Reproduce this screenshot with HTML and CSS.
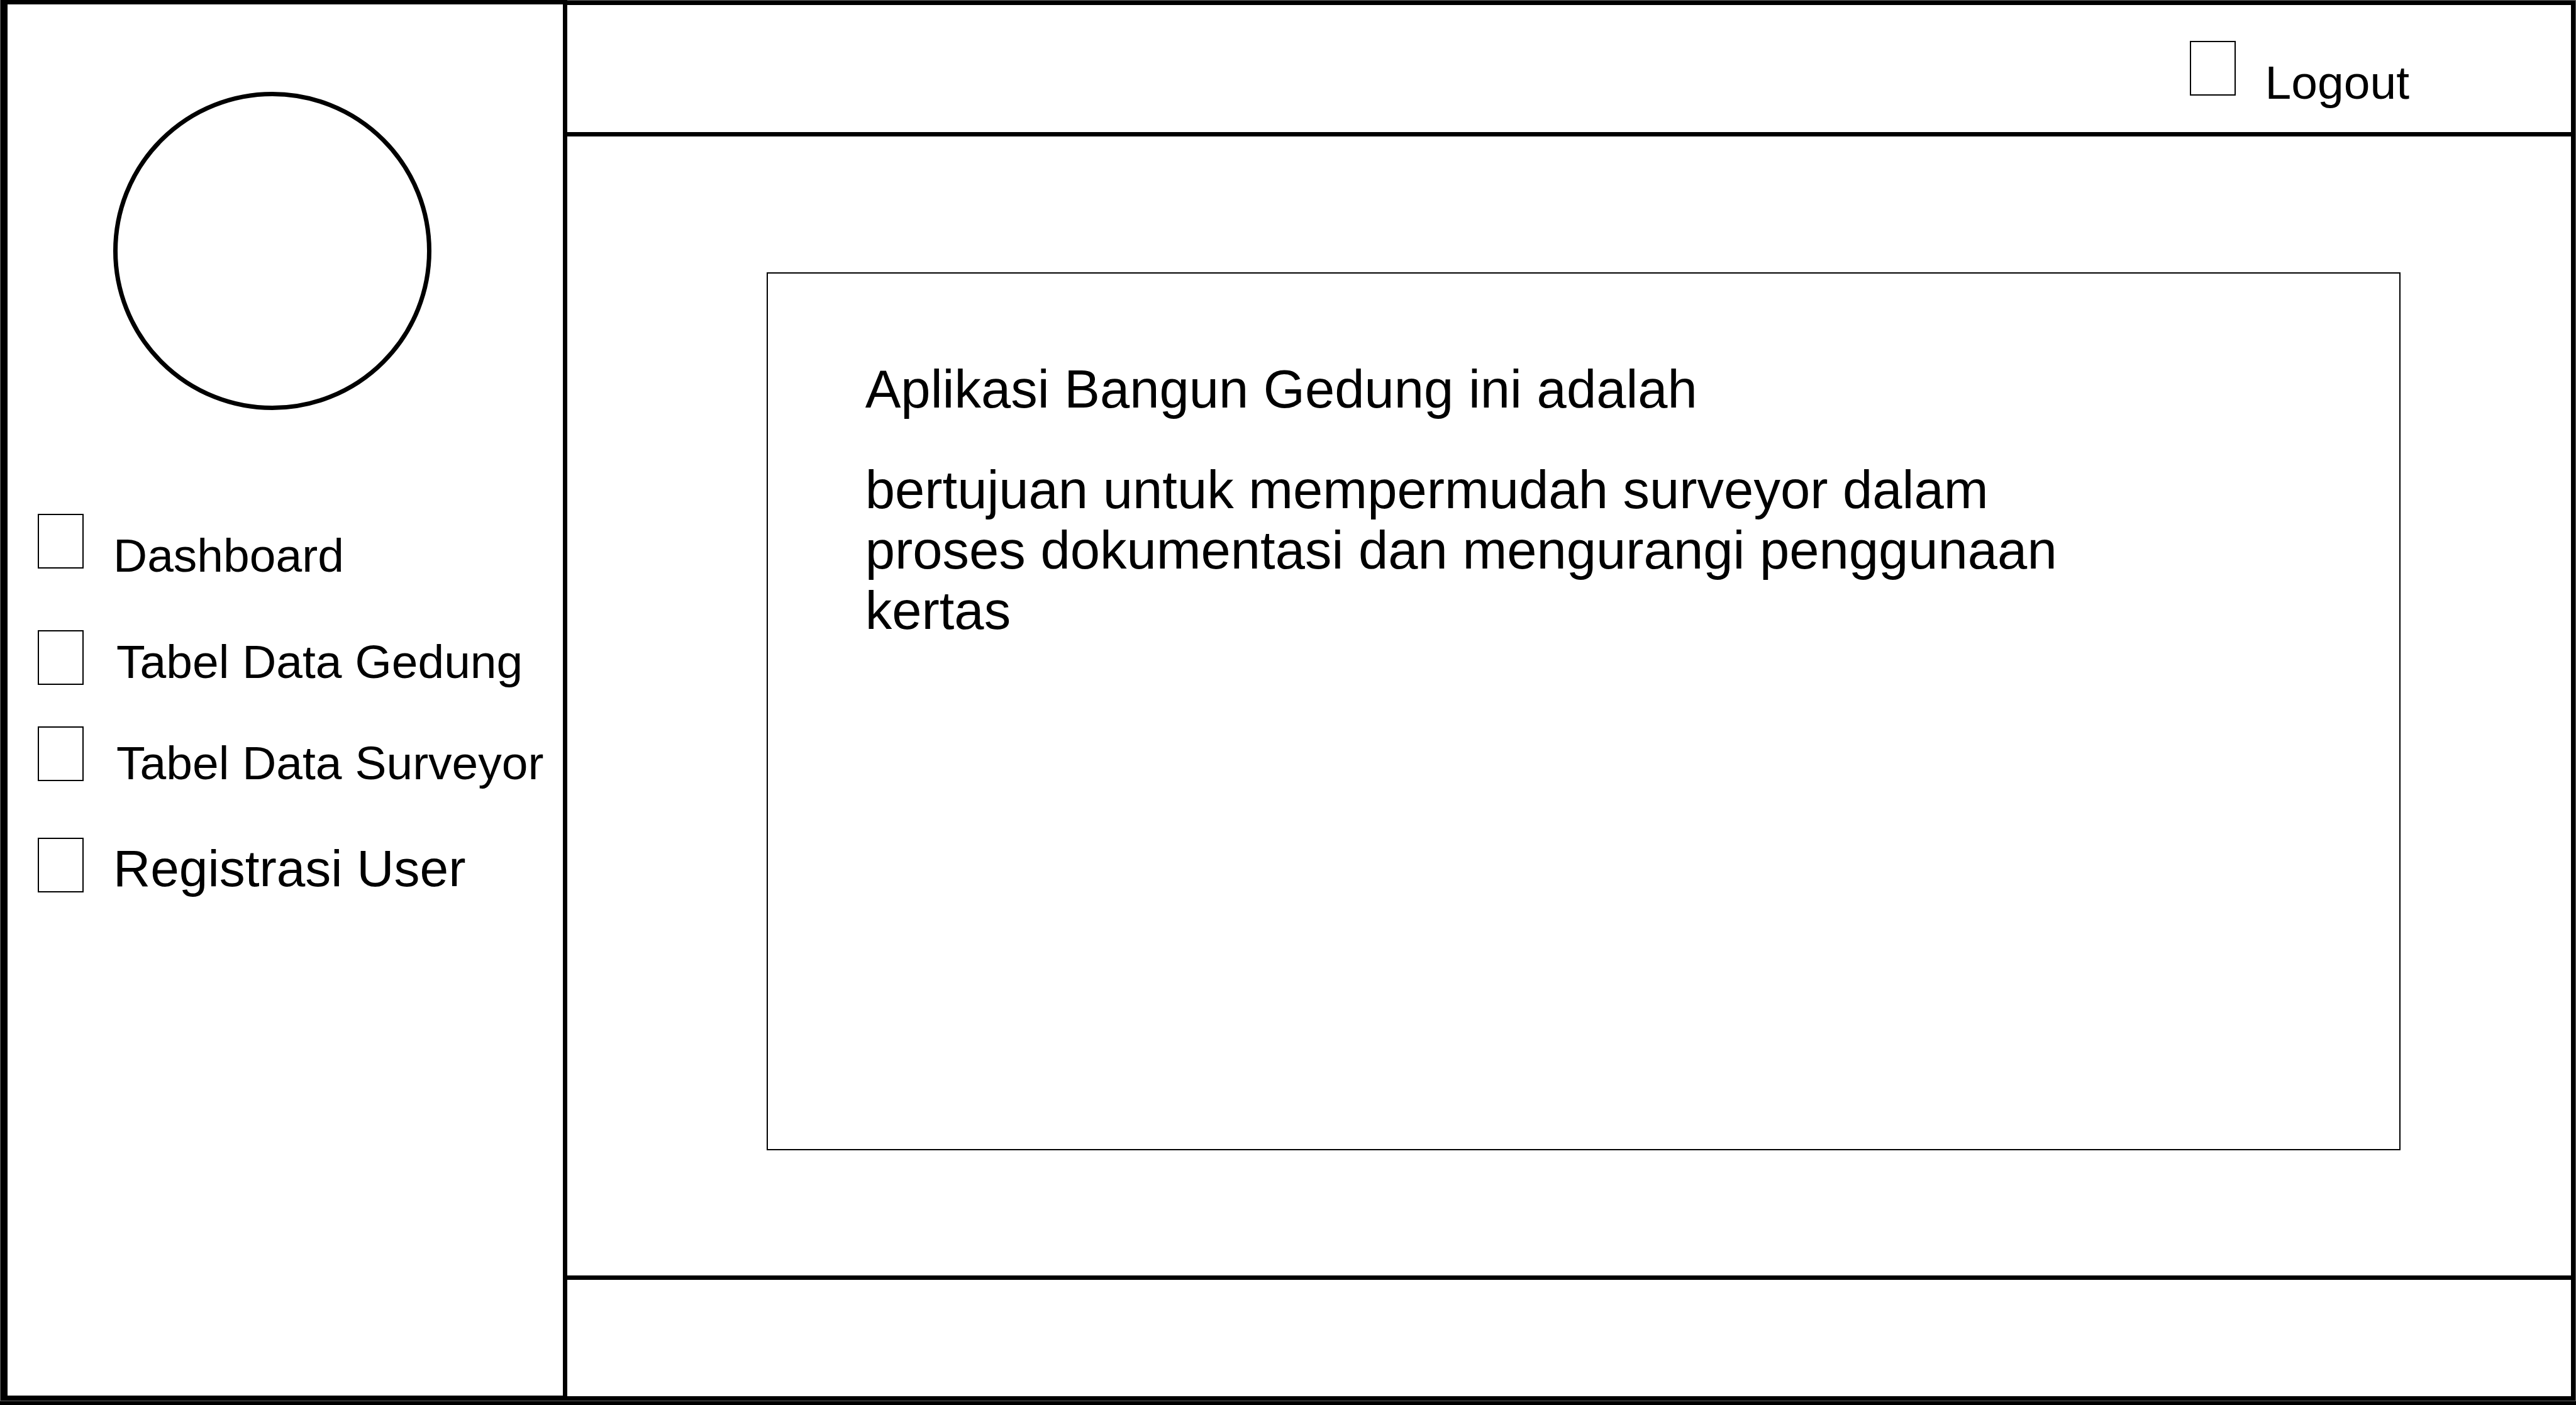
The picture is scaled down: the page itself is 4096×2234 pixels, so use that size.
FILE: index.html
```html
<!DOCTYPE html>
<html lang="id">
<head>
  <meta charset="utf-8">
  <meta name="viewport" content="width=device-width, initial-scale=1">
  <title>Aplikasi Bangun Gedung</title>
  <link rel="stylesheet" href="styles.css">
</head>
<body>
  <div class="app">
    <aside class="sidebar">
      <div class="avatar"></div>
      <nav class="nav">
        <a class="item item-low item-spaced" href="#dashboard"><span class="icon"></span><span class="label">Dashboard</span></a>
        <a class="item item-high item-table" href="#gedung"><span class="icon"></span><span class="label">Tabel Data Gedung</span></a>
        <a class="item item-mid item-table item-spaced" href="#surveyor"><span class="icon"></span><span class="label">Tabel Data Surveyor</span></a>
        <a class="item item-large" href="#registrasi"><span class="icon"></span><span class="label">Registrasi User</span></a>
      </nav>
    </aside>
    <div class="page">
      <header class="header">
        <button class="item item-low" type="button"><span class="icon"></span><span class="label">Logout</span></button>
      </header>
      <main class="content">
        <section class="card">
          <p class="text">Aplikasi Bangun Gedung ini adalah</p>
          <p class="text">bertujuan untuk mempermudah surveyor dalam proses dokumentasi dan mengurangi penggunaan kertas</p>
        </section>
      </main>
      <footer class="footer"></footer>
    </div>
  </div>
</body>
</html>
```
FILE: styles.css
```css
* {
  box-sizing: border-box;
}

body {
  margin: 0;
  background: #fff;
  color: #000;
  font-family: "Liberation Sans", Arial, sans-serif;
  font-size: 75px;
  line-height: 84px;
}

.app {
  display: grid;
  grid-template-columns: 22% 1fr;
  min-height: 100vh;
  padding: 0 1px 1px;
  border-bottom: 6px solid #000;
  background: #666;
}

.sidebar {
  padding: 139px 0 0 48px;
  border: solid #000;
  border-width: 7px 7px 8px 11px;
  background: #fff;
}

.avatar {
  width: 506px;
  height: 506px;
  margin-left: 120px;
  border: 7px solid #000;
  border-radius: 50%;
}

.nav {
  display: flex;
  flex-direction: column;
  gap: 61px;
  margin-top: 165px;
}

.item {
  display: flex;
  align-items: flex-start;
  gap: 47px;
  padding: 0;
  border: 0;
  background: none;
  color: inherit;
  font: inherit;
  text-align: left;
  text-decoration: none;
  white-space: nowrap;
  cursor: pointer;
}

.icon {
  flex: none;
  width: 73px;
  height: 87px;
  border: 2px solid #000;
}

.item-low .label {
  padding-top: 24px;
}

.item-mid .label {
  padding-top: 16px;
}

.item-high .label {
  padding-top: 8px;
}

.item-table .label {
  padding-left: 5px;
}

.item-spaced {
  padding-bottom: 16px;
}

.item-large {
  font-size: 82px;
  line-height: 98px;
}

.page {
  display: flex;
  flex-direction: column;
  margin-top: 1px;
  border: solid #000;
  border-width: 7px 7px 7px 0;
  background: #fff;
}

.header {
  display: flex;
  justify-content: flex-end;
  padding: 57px 257px 37px 0;
  border-bottom: 7px solid #000;
}

.content {
  display: flex;
  flex: 1;
  padding: 216px 271px 199px 317px;
}

.card {
  flex: 1;
  padding: 136px 155px;
  border: 2px solid #000;
}

.text {
  max-width: 2000px;
  margin: 0 0 64px;
  font-size: 85px;
  line-height: 96px;
}

.footer {
  height: 192px;
  border-top: 7px solid #000;
}
```
